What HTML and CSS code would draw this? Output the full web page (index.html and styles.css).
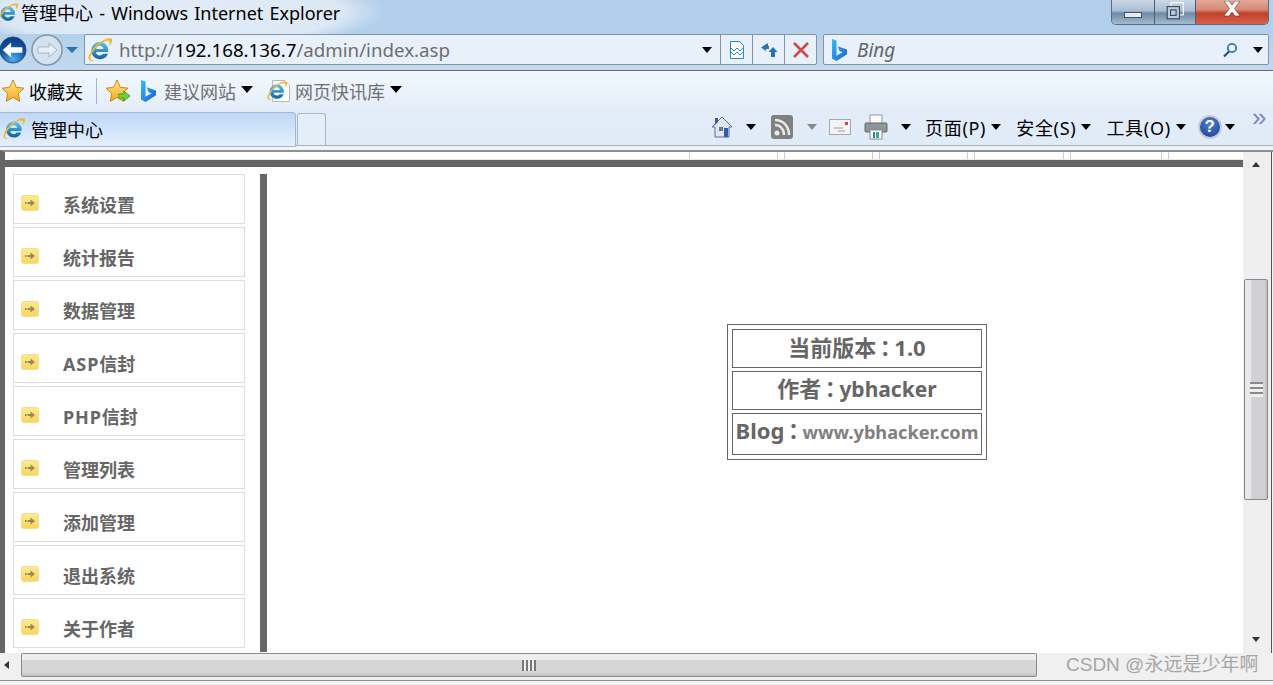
FILE: index.html
```html
<!DOCTYPE html>
<html lang="zh">
<head>
<meta charset="utf-8">
<title>管理中心 - Windows Internet Explorer</title>
<link rel="stylesheet" href="styles.css">
</head>
<body>
<svg class="defs" width="0" height="0" aria-hidden="true">
  <defs>
    <linearGradient id="ieg" x1="0" y1="0" x2="0" y2="1"><stop offset="0" stop-color="#5fc6ee"/><stop offset="1" stop-color="#0b5fa8"/></linearGradient>
    <radialGradient id="btn" cx=".5" cy=".85" r=".85"><stop offset="0" stop-color="#4fb0ee"/><stop offset=".55" stop-color="#1257a8"/><stop offset="1" stop-color="#0a3a80"/></radialGradient>
    <linearGradient id="star" x1="0" y1="0" x2="0" y2="1"><stop offset="0" stop-color="#ffe88a"/><stop offset="1" stop-color="#f6a81c"/></linearGradient>
    <linearGradient id="bing" x1="0" y1="0" x2="1" y2="1"><stop offset="0" stop-color="#37bdf0"/><stop offset="1" stop-color="#1560d8"/></linearGradient>
    <linearGradient id="arrowbg" x1="0" y1="0" x2="0" y2="1"><stop offset="0" stop-color="#fdea8e"/><stop offset="1" stop-color="#f8d55c"/></linearGradient>
    <symbol id="ie" viewBox="1 1 22 22">
      <path d="M12 4.500a8 8 0 0 0-8 8c0 4.600 3.600 8 8 8 3.400 0 6.200-1.900 7.300-5h-4.600c-.7 1-1.700 1.500-2.900 1.500-1.900 0-3.300-1.200-3.500-3.100h11.200c.1-.4.100-.8.100-1.300a8 8 0 0 0-7.600-8.100zM8.300 11c.3-1.700 1.700-3 3.500-3s3.200 1.300 3.400 3z" fill="url(#ieg)"/>
      <path d="M2 21c-2.200-3 3-11 9-15.500C16.500 1.500 21.500.3 23 2c1 1.300-.3 3.700-2.500 6.300.6-2 .7-3.500 0-4.200C19 2.800 15 4 10.500 8 5.400 12.500 2 18.500 3.500 20.700c.8 1 2.600 1 5-.1-2.800 1.700-5.300 1.900-6.500.4z" fill="#f2b632"/>
    </symbol>
    <symbol id="star-i" viewBox="0 0 24 24">
      <path d="M12 1l3.300 7.300 7.700.9-5.700 5.300 1.500 7.900L12 18.400 5.200 22.400l1.500-7.900L1 9.200l7.700-.9z" fill="url(#star)" stroke="#c98a1a" stroke-width="1"/>
    </symbol>
    <symbol id="bing-i" viewBox="0 0 16 24">
      <path d="M1 1l4.500 1.600v15.200l6-3.500-3-1.400-1.800-4.600 9.300 3.300v4.700L5.500 23 1 20.500z" fill="url(#bing)"/>
    </symbol>
    <symbol id="arrow-i" viewBox="0 0 18 16">
      <rect x=".5" y=".5" width="17" height="15" rx="2" fill="url(#arrowbg)" stroke="#f3dd9a"/>
      <path d="M4 7h1.500v2H4zM6.500 7h3V4.500L14 8l-4.500 3.500V9h-3z" fill="#928a5c"/>
    </symbol>
  </defs>
</svg>

<div class="window">
  <header class="titlebar">
    <svg class="title-ie"><use href="#ie"/></svg>
    <span class="title-text">管理中心 - Windows Internet Explorer</span>
    <div class="winbtns">
      <div class="winbtn min"><span class="min-glyph"></span></div>
      <div class="winbtn rest"><svg width="20" height="20" viewBox="0 0 18 18"><rect x="5.500" y="1.500" width="11" height="11" fill="none" stroke="#fff"/><rect x="2" y="5" width="11" height="11" fill="#b9cbdc" stroke="#3d4a58"/><rect x="5" y="8" width="5" height="5" fill="none" stroke="#3d4a58"/></svg></div>
      <div class="winbtn close"><svg width="20" height="16" viewBox="0 0 20 16"><path d="M2 0h5l3 4 3-4h5l-5.500 7.500L18 15h-5l-3-4-3 4H2l5.500-7.500z" fill="#fff" stroke="#7a2a20" stroke-width=".6"/></svg></div>
    </div>
  </header>

  <div class="navrow">
    <svg class="nav-back" viewBox="0 0 30 30"><circle cx="15" cy="15" r="14" fill="url(#btn)" stroke="#2c4d78"/><path d="M4 15l9-8v5h12v6H13v5z" fill="#fff"/></svg>
    <svg class="nav-fwd" viewBox="0 0 32 32"><circle cx="16" cy="16" r="15" fill="#d3e2f0" stroke="#8496a8" stroke-width="1.500"/><path d="M26 16l-8-7v4H7v6h11v4z" fill="#e8eff6" stroke="#a8b6c4"/></svg>
    <span class="nav-drop"></span>
    <div class="addr">
      <svg class="addr-ie"><use href="#ie"/></svg>
      <span class="url">http://<b class="host">192.168.136.7</b>/admin/index.asp</span>
      <span class="caret addr-caret"></span>
      <span class="addr-btn"><svg width="16" height="20" viewBox="0 0 16 20"><path d="M1.500 1.500h9l4 4v13h-13z" fill="#fff" stroke="#2a86d0"/><path d="M2 8l3 3 3-3 3 3 3-3M2 12l3 3 3-3 3 3 3-3" fill="none" stroke="#2a86d0"/></svg></span>
      <span class="addr-btn"><svg width="18" height="18" viewBox="0 0 18 18"><path d="M8 2L1 6.500 6 10V8h3V5H8zM13 6l-4.500 5H11v5h4v-5h2.500z" fill="#2c6eb8"/></svg></span>
      <span class="addr-btn last"><svg width="18" height="18" viewBox="0 0 18 18"><path d="M2 2l14 14M16 2L2 16" stroke="#cf4a45" stroke-width="2.600"/></svg></span>
    </div>
    <div class="search">
      <svg class="search-bing"><use href="#bing-i"/></svg>
      <span class="search-text">Bing</span>
      <svg class="search-glass" viewBox="0 0 16 16"><circle cx="10" cy="6" r="4.200" fill="#eaf2fa" stroke="#2f78bd" stroke-width="1.800"/><path d="M7 9.500L2 14.500" stroke="#1d4f8a" stroke-width="2.200"/></svg>
      <span class="caret search-caret"></span>
    </div>
  </div>

  <div class="favrow">
    <svg class="fav-star"><use href="#star-i"/></svg>
    <span class="fav-label">收藏夹</span>
    <span class="fav-sep"></span>
    <span class="fav-add">
      <svg class="fav-star"><use href="#star-i"/></svg>
      <svg class="fav-plus" viewBox="0 0 12 10"><path d="M0 3h6V0l6 5-6 5V7H0z" fill="#6fd23c" stroke="#2f8a1a" stroke-width=".7"/></svg>
    </span>
    <svg class="fav-bing"><use href="#bing-i"/></svg>
    <span class="fav-link">建议网站</span>
    <span class="caret big"></span>
    <span class="page-ie">
      <svg class="page-sheet" viewBox="0 0 22 24"><path d="M3.500 1.500h12l5 5v16h-17z" fill="#fff" stroke="#b8b8b8"/></svg>
      <svg class="page-logo"><use href="#ie"/></svg>
    </span>
    <span class="fav-link">网页快讯库</span>
    <span class="caret big"></span>
  </div>

  <div class="tabrow">
    <div class="tab">
      <svg class="tab-ie"><use href="#ie"/></svg>
      <span>管理中心</span>
    </div>
    <div class="newtab"></div>
    <div class="tools">
      <svg class="t-home" viewBox="0 0 22 24"><path d="M11 2L1 12h3v10h14V12h3z" fill="#dfe6ee" stroke="#5b6fa8"/><path d="M4 3h3v4L4 10z" fill="#3b55a8"/><rect x="8" y="12" width="4" height="4" fill="#6a7a8c"/><rect x="13" y="13" width="4" height="9" fill="#2e5ea8"/></svg>
      <span class="caret t1"></span>
      <svg class="t-rss" viewBox="0 0 22 24"><rect width="22" height="24" rx="3" fill="#808080"/><circle cx="6" cy="18" r="2.500" fill="#e8e8e8"/><path d="M4 10c5 0 9 4 9 10M4 5c8 0 14 6 14 15" fill="none" stroke="#e8e8e8" stroke-width="2.500"/></svg>
      <span class="caret grey t2"></span>
      <svg class="t-mail" viewBox="0 0 22 16"><rect x=".5" y=".5" width="21" height="15" fill="#f4f4f4" stroke="#a8a8a8"/><rect x="16" y="3" width="3" height="3" fill="#e0403a"/><path d="M5 9h9M9 12h7" stroke="#9a9a9a"/></svg>
      <svg class="t-print" viewBox="0 0 24 26"><rect x="6" y="1" width="12" height="9" fill="#fafafa" stroke="#9a9a9a"/><rect x="1" y="9" width="22" height="9" rx="1" fill="#8c959c" stroke="#666"/><rect x="19" y="11" width="2" height="2" fill="#5fd04a"/><rect x="6" y="16" width="12" height="9" fill="#fff" stroke="#8a8a8a"/><rect x="9" y="18" width="2" height="6" fill="#2e7fb8"/><rect x="12" y="18" width="3" height="6" fill="#3fa8a0"/></svg>
      <span class="caret t3"></span>
      <span class="t-text t4">页面(P)</span>
      <span class="caret t5"></span>
      <span class="t-text t6">安全(S)</span>
      <span class="caret t5"></span>
      <span class="t-text t6">工具(O)</span>
      <span class="caret t5"></span>
      <span class="t-help">?</span>
      <span class="caret t7"></span>
      <span class="chev">»</span>
    </div>
  </div>

  <div class="client">
    <div class="viewport">
      <div class="ticks">
        <i class="tick"></i><i class="tick"></i><i class="tick"></i><i class="tick"></i><i class="tick"></i><i class="tick"></i><i class="tick"></i><i class="tick"></i><i class="tick"></i><i class="tick"></i><i class="tick"></i>
      </div>
      <div class="topbar"></div>
      <div class="frames">
        <nav class="menu">
          <a class="item"><svg class="item-ic"><use href="#arrow-i"/></svg><span>系统设置</span></a>
          <a class="item"><svg class="item-ic"><use href="#arrow-i"/></svg><span>统计报告</span></a>
          <a class="item"><svg class="item-ic"><use href="#arrow-i"/></svg><span>数据管理</span></a>
          <a class="item wide"><svg class="item-ic"><use href="#arrow-i"/></svg><span><em>ASP</em>信封</span></a>
          <a class="item wide"><svg class="item-ic"><use href="#arrow-i"/></svg><span><em>PHP</em>信封</span></a>
          <a class="item"><svg class="item-ic"><use href="#arrow-i"/></svg><span>管理列表</span></a>
          <a class="item"><svg class="item-ic"><use href="#arrow-i"/></svg><span>添加管理</span></a>
          <a class="item"><svg class="item-ic"><use href="#arrow-i"/></svg><span>退出系统</span></a>
          <a class="item"><svg class="item-ic"><use href="#arrow-i"/></svg><span>关于作者</span></a>
        </nav>
        <div class="divider"></div>
        <main class="main">
          <table class="info">
            <tr><td class="r1">当前版本<span class="colon" lang="zh-Hant">：</span>1.0</td></tr>
            <tr><td class="r2">作者<span class="colon" lang="zh-Hant">：</span><span class="lat">ybhacker</span></td></tr>
            <tr><td class="r3">Blog<span class="colon" lang="zh-Hant">：</span><span class="site">www.ybhacker.com</span></td></tr>
          </table>
        </main>
      </div>
    </div>
    <div class="vbar">
      <span class="v-up"></span>
      <div class="v-thumb"><span class="grip-h"></span></div>
      <span class="v-down"></span>
    </div>
  </div>

  <div class="hbar">
    <span class="h-left"></span>
    <div class="h-thumb"><span class="grip-v"></span></div>
    <span class="mark">CSDN @永远是少年啊</span>
  </div>
  <div class="statusline"></div>
</div>
</body>
</html>
```

FILE: styles.css
```css
* { box-sizing: border-box; }
html, body { margin: 0; padding: 0; height: 100%; overflow: hidden; background: #f5f2f2; }
body { font-family: "Noto Sans", "Noto Sans CJK SC", sans-serif; color: #000; }
.defs { position: absolute; }
.window { width: 1273px; height: 685px; display: flex; flex-direction: column; overflow: hidden; }

.titlebar { height: 34px; flex: none; display: flex; align-items: flex-start; background: radial-gradient(ellipse 215px 40px at 170px 12px, #e2ecf7 0, #dce8f5 80%, #b2cfeb 100%), #b2cfeb; }
.title-ie { width: 20px; height: 20px; margin: 3px 3px 0 -2px; flex: none; }
.title-text { font-size: 18px; line-height: 26px; color: #000; white-space: nowrap; word-spacing: 1.500px; }
.winbtns { margin-left: auto; margin-right: 4px; display: flex; height: 25px; border: 1px solid #5d6d80; border-top: 0; border-radius: 0 0 5px 5px; overflow: hidden; }
.winbtn { display: flex; align-items: center; justify-content: center; background: linear-gradient(#cbd9e8 0, #a9bdd2 45%, #6f8aa6 55%, #a4bacf 100%); border-right: 1px solid #4f5f72; }
.winbtn.min { width: 43px; padding-top: 5px; }
.winbtn.rest { width: 41px; padding-bottom: 3px; }
.winbtn.close { width: 72px; border-right: 0; background: linear-gradient(#e2a99a 0, #d58a76 40%, #c2422a 55%, #d4604a 100%); padding-bottom: 6px; }
.min-glyph { width: 18px; height: 6px; background: #e6ecf3; border: 1px solid #45525f; }

.navrow { height: 37px; flex: none; display: flex; align-items: flex-start; background: linear-gradient(#b4d0ea, #c3d9ee); border-bottom: 1px solid #5f6b78; }
.nav-back { width: 28px; height: 30px; margin: 1px 0 0 -1px; flex: none; }
.nav-fwd { width: 32px; height: 32px; margin: 0 0 0 4px; flex: none; }
.nav-drop { width: 0; height: 0; margin: 13px 0 0 3px; border-top: 6px solid #2d6fb0; border-left: 6px solid transparent; border-right: 6px solid transparent; flex: none; }
.addr { width: 733px; height: 31px; margin-left: 6px; display: flex; align-items: center; flex: none; background: #e8f0f9; border: 1px solid #8593a2; border-radius: 2px; }
.addr-ie { width: 24px; height: 24px; margin-left: 3px; flex: none; }
.url { margin-left: 7px; font-size: 18.700px; color: #6e6e6e; white-space: nowrap; }
.host { font-weight: 400; color: #000; }
.addr-caret { margin-left: auto; margin-right: 8px; }
.addr-btn { width: 32px; height: 29px; display: flex; align-items: center; justify-content: center; border-left: 1px solid #8593a2; flex: none; }
.search { width: 446px; height: 31px; margin-left: 6px; display: flex; align-items: center; flex: none; background: #e8f0f9; border: 1px solid #8593a2; border-radius: 2px; }
.search-bing { width: 16px; height: 24px; margin-left: 7px; flex: none; }
.search-text { margin-left: 10px; font-size: 19px; font-style: italic; color: #666; }
.search-glass { width: 16px; height: 16px; margin-left: auto; flex: none; }
.search-caret { margin: 0 5px 0 15px; }

.caret { display: inline-block; width: 0; height: 0; flex: none; border-left: 5.500px solid transparent; border-right: 5.500px solid transparent; border-top: 6px solid #000; }
.caret.big { border-left-width: 6.500px; border-right-width: 6.500px; border-top-width: 7px; margin-left: 5px; margin-bottom: 3px; }
.caret.grey { border-top-color: #888; }

.favrow { height: 39px; flex: none; display: flex; align-items: center; background: linear-gradient(#f4f8fe, #e3edf9); font-size: 18px; }
.fav-star { width: 24px; height: 24px; flex: none; display: block; }
.favrow > .fav-star { margin-left: 1px; }
.fav-label { margin-left: 4px; white-space: nowrap; }
.fav-sep { width: 1px; height: 26px; margin-left: 13px; background: #a8b4c0; flex: none; }
.fav-add { position: relative; width: 24px; height: 24px; margin-left: 8px; flex: none; }
.fav-plus { position: absolute; right: -1px; bottom: 2px; width: 12px; height: 10px; }
.fav-bing { width: 16px; height: 24px; margin-left: 11px; flex: none; }
.fav-link { color: #707070; margin-left: 8px; white-space: nowrap; }
.page-ie { position: relative; width: 24px; height: 24px; margin-left: 14px; flex: none; }
.page-sheet { position: absolute; inset: 0; width: 22px; height: 24px; margin-left: 2px; }
.page-logo { position: absolute; left: 0; top: 2px; width: 20px; height: 20px; }
.page-ie + .fav-link { margin-left: 4px; }

.tabrow { height: 40px; flex: none; display: flex; align-items: flex-start; background: linear-gradient(#e3edf9 0, #e0ebf8 87%, #f0f4f8 88%); position: relative; padding-top: 2px; }
.tabrow::after { content: ""; position: absolute; left: 296px; right: 0; top: 35px; height: 1px; background: #a8b0b8; }
.tab { width: 296px; height: 35px; flex: none; display: flex; align-items: center; padding-bottom: 2px; font-size: 18px; background: linear-gradient(#bdd8f8, #e6f0fb); border: 1px solid #a8b8c8; border-left: 0; border-radius: 0 4px 0 0; }
.tab-ie { width: 22px; height: 22px; margin: 0 6px 0 3px; flex: none; }
.newtab { width: 29px; height: 33px; margin: 1px 0 0 1px; flex: none; background: #e4eef9; border: 1px solid #a8b8c8; border-bottom: 0; border-radius: 3px 3px 0 0; }
.tools { position: absolute; left: 711px; top: 0; right: 0; height: 34px; display: flex; align-items: center; font-size: 18px; }
.t-home { width: 22px; height: 24px; flex: none; }
.t1 { margin-left: 13px; }
.t-rss { width: 22px; height: 24px; margin-left: 15px; flex: none; }
.t2 { margin-left: 14px; }
.t-mail { width: 22px; height: 16px; margin-left: 12px; flex: none; }
.t-print { width: 24px; height: 26px; margin-left: 13px; flex: none; }
.t3 { margin-left: 13px; }
.t-text { white-space: nowrap; font-size: 18px; letter-spacing: .7px; }
.t4 { margin-left: 14px; }
.t5 { margin-left: 5px; }
.t6 { margin-left: 15px; }
.t-help { width: 24px; height: 24px; margin-left: 12px; border-radius: 50%; flex: none; display: flex; align-items: center; justify-content: center; background: radial-gradient(circle at 50% 30%, #4d7fd0, #1b3f96); border: 2px solid #c8ccd2; color: #fff; font: bold 17px "Liberation Sans", sans-serif; }
.t7 { margin-left: 3px; }
.chev { position: absolute; left: 541px; top: -6px; font-size: 26px; line-height: 26px; color: #7d86c8; font-family: "Liberation Sans", sans-serif; }

.client { height: 503px; flex: none; display: flex; border-top: 2px solid #8f8f8f; border-left: 5px solid #666; }
.viewport { flex: 1; min-width: 0; display: flex; flex-direction: column; background: #fff; }
.ticks { height: 8px; flex: none; display: flex; border-bottom: 1px solid #e6e6e6; margin-left: 8px; }
.tick { width: 1px; height: 7px; flex: none; background: #ccc; }
.tick:nth-child(odd) { margin-left: 6px; }
.tick:nth-child(even) { margin-left: 87px; }
.tick:nth-child(1) { margin-left: 676px; }
.tick:nth-child(8) { margin-left: 88px; }
.tick:nth-child(10) { margin-left: 90px; }
.topbar { height: 7px; flex: none; background: #666; }
.frames { flex: 1; min-height: 0; display: flex; padding-top: 7px; }
.menu { width: 240px; margin-left: 8px; flex: none; display: flex; flex-direction: column; gap: 3px; overflow: hidden; }
.item { width: 232px; height: 50px; flex: none; display: flex; border: 1px solid #ddd; font-size: 18px; line-height: 24px; font-weight: 700; color: #666; }
.item span { margin: 18px 0 0 24px; white-space: nowrap; }
.item em { font-style: normal; letter-spacing: .9px; }
.item-ic { width: 18px; height: 16px; margin: 20px 0 0 7px; flex: none; }
.divider { width: 7px; margin-left: 7px; margin-bottom: 1px; flex: none; background: #666; }
.main { flex: 1; min-width: 0; padding: 150px 0 0 460px; }
.info { border: 1px solid #666; border-spacing: 3px 3px; padding: 1px; width: 260px; height: 134px; color: #666; font-weight: 700; text-align: center; }
.info td { border: 1px solid #666; padding: 0 0 5px; white-space: nowrap; font-size: 22px; line-height: 30px; }
.r1 { height: 39px; }
.r2 { height: 39px; }
.info .r3 { height: 41px; padding-bottom: 7px; }
.colon { font-family: "Noto Sans CJK TC", sans-serif; margin: 0 -2px; }
.lat { font-size: 21px; }
.site { font-size: 18.200px; color: #808080; }

.vbar { width: 29px; margin-right: 1px; flex: none; position: relative; background: #efefef; border-right: 1px solid #555; }
.v-up, .v-down { position: absolute; left: 9px; width: 0; height: 0; border-left: 4.500px solid transparent; border-right: 4.500px solid transparent; }
.v-up { top: 10px; border-bottom: 5px solid #333; }
.v-down { bottom: 11px; border-top: 5px solid #333; }
.v-thumb { position: absolute; left: 1px; top: 127px; width: 24px; height: 221px; border: 1px solid #8a8a8a; border-radius: 2px; background: linear-gradient(90deg, #e8e8e8 0, #e8e8e8 28%, #cfd1d4 30%, #cfd1d4 88%, #bdbdbd 100%); display: flex; align-items: center; justify-content: center; }
.grip-h { width: 13px; height: 15px; background: repeating-linear-gradient(#8a8a8a 0, #8a8a8a 2px, #efefef 2px, #efefef 5px); }
.hbar { height: 27px; flex: none; position: relative; background: #f0f0f0; }
.h-left { position: absolute; left: 4px; top: 8px; width: 0; height: 0; border-top: 4.500px solid transparent; border-bottom: 4.500px solid transparent; border-right: 5px solid #333; }
.h-thumb { position: absolute; left: 21px; top: 0; width: 1016px; height: 24px; border: 1px solid #8a8a8a; border-radius: 2px; background: linear-gradient(#eeeeee 0, #eeeeee 25%, #d5d6d8 30%, #d5d6d8 85%, #bdbdbd 100%); display: flex; align-items: center; justify-content: center; }
.grip-v { width: 14px; height: 11px; background: repeating-linear-gradient(90deg, #777 0, #777 2px, #efefef 2px, #efefef 4px); }
.mark { position: absolute; left: 1066px; top: 0; font-size: 19px; line-height: 24px; color: #a6a6a6; white-space: nowrap; font-family: "Liberation Sans", "Noto Sans CJK SC", sans-serif; }
.statusline { height: 1px; flex: none; background: #8f8f8f; }
```
